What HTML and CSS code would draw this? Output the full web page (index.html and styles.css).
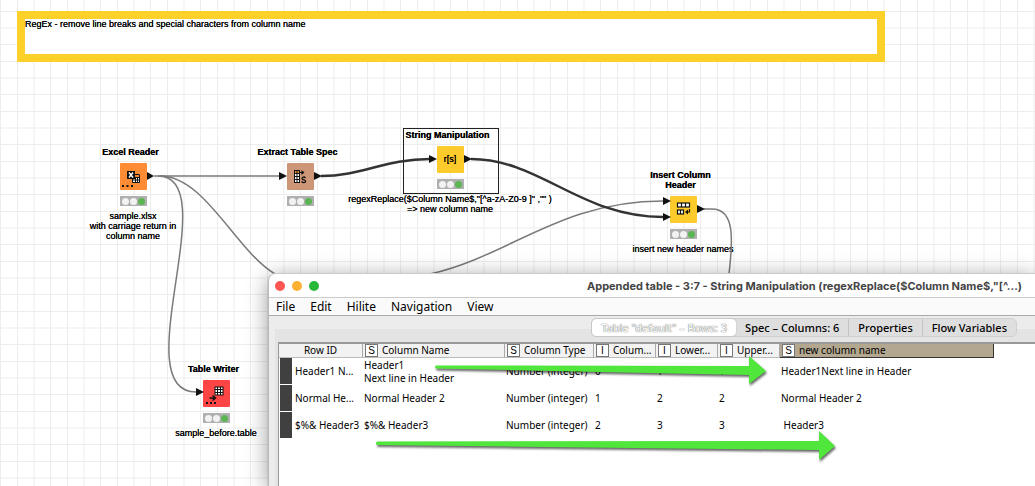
FILE: index.html
```
<!DOCTYPE html>
<html lang="en">
<head>
<meta charset="utf-8">
<title>Workflow editor</title>
<link rel="stylesheet" href="styles.css">
</head>
<body>
<main class="canvas">
  <svg class="layer" aria-hidden="true">
    <defs>
      <pattern id="grid" width="50" height="50" patternUnits="userSpaceOnUse">
        <path d="M0.5 0V50M17.5 0V50M34 0V50M0 11.5H50M0 28H50M0 44.5H50" stroke="#ededed" fill="none"/>
      </pattern>
    </defs>
    <rect width="100%" height="100%" fill="url(#grid)"/>
  </svg>

  <p class="note">RegEx - remove line breaks and special characters from column name</p>

  <section class="node excel">
    <h2 class="node-title">Excel Reader</h2>
    <svg class="node-icon" viewBox="0 0 27 27"><rect width="27" height="27" rx="1" fill="#fd8c35"/><path d="M12.500 11.500H19.500V19.500H12.500Z" fill="#fff" stroke="#111"/><path d="M13 12H19V14H13Z" fill="#f8862f"/><path d="M13 14.500H20M13 17H20M15.500 14V19M17.500 14V19" stroke="#111" fill="none"/><rect x="7" y="8" width="8" height="8" fill="#111"/><path d="M9 9.500L13 14.500M13 9.500L9 14.500" stroke="#fff" stroke-width="1.500"/><path d="M2 22h2v2h-2zM6.500 22h2v2h-2zM11 22h2v2h-2z" fill="#111"/></svg>
    <div class="lights"><i></i><i></i><i class="on"></i></div>
    <p class="caption">sample.xlsx<br>with carriage return in<br>column name</p>
  </section>

  <section class="node extract">
    <h2 class="node-title">Extract Table Spec</h2>
    <svg class="node-icon" viewBox="0 0 27 27"><rect width="27" height="27" rx="1" fill="#cd9777"/><path d="M7 7.500H13V20H7Z" fill="#fff"/><path d="M7 8H13V10.500H7Z" fill="#f58a20"/><path d="M7 7.500H13M7 10.500H13M7 13.500H13M7 16.500H13M7 19.500H13M7.500 7V20M10 7V20M12.500 7V20" stroke="#111" fill="none"/><path d="M13 9.500H16" stroke="#111"/><path d="M14.500 7L17.500 9.500L14.500 12Z" fill="#111"/><path d="M18.500 15C17.500 13.500 15 13.800 15 15.500C15 17.300 18.600 16.300 18.600 18.200C18.600 20 15.500 20 14.600 18.400" stroke="#111" stroke-width="1.300" fill="none"/></svg>
    <div class="lights"><i></i><i></i><i class="on"></i></div>
  </section>

  <section class="node string">
    <h2 class="node-title">String Manipulation</h2>
    <div class="node-icon yellow">r[s]</div>
    <div class="lights"><i></i><i></i><i class="on"></i></div>
    <p class="caption">regexReplace($Column Name$,"[^a-zA-Z0-9 ]" ,"" )<br>=&gt; new column name</p>
  </section>

  <section class="node insert">
    <h2 class="node-title">Insert Column<br>Header</h2>
    <svg class="node-icon" viewBox="0 0 27 27"><rect width="27" height="27" rx="1" fill="#fecb2c"/><rect x="7.500" y="7" width="12" height="4" fill="#fff" stroke="#111" stroke-width="1.200"/><path d="M11.500 7V11M15.500 7V11" stroke="#111" stroke-width="1.200"/><rect x="7.500" y="14" width="6" height="4" fill="#fff" stroke="#111" stroke-width="1.200"/><path d="M10.500 14V18M19.500 13V16H17" stroke="#111" stroke-width="1.200" fill="none"/><path d="M15 16L18 13.500V18.500Z" fill="#111"/></svg>
    <div class="lights"><i></i><i></i><i class="on"></i></div>
    <p class="caption">insert new header names</p>
  </section>

  <section class="node writer">
    <h2 class="node-title">Table Writer</h2>
    <svg class="node-icon" viewBox="0 0 27 27"><rect width="27" height="27" rx="1" fill="#fd4545"/><rect x="12" y="7" width="8" height="8" fill="#fff" stroke="#111"/><path d="M14.500 7V15M17.500 7V15M12 9.500H20M12 12.500H20" stroke="#111"/><path d="M6.500 18H12M9.500 15.500L12.500 18L9.500 20.500" stroke="#111" stroke-width="1.500" fill="none"/><path d="M3 22h2v2h-2zM7 22h2v2h-2zM11 22h2v2h-2z" fill="#111"/></svg>
    <div class="lights"><i></i><i></i><i class="on"></i></div>
    <p class="caption">sample_before.table</p>
  </section>

  <svg class="layer" aria-hidden="true">
    <g fill="none" stroke="#7a7a7a" stroke-width="1.500">
      <path d="M154 176H280"/>
      <path d="M158 176C226 176 124 392 196 392"/>
      <path d="M160 176C205 176 235 250 275 274"/>
      <path d="M430 274C510 256 560 201 663 201"/>
      <path d="M704 209H712C735 209 733 240 729 274"/>
    </g>
    <g fill="none" stroke="#333" stroke-width="2.500">
      <path d="M321 176C362 176 385 159 430 159"/>
      <path d="M471 159C540 159 580 217 663 217"/>
    </g>
    <g fill="#111">
      <path d="M147 172L154 176L147 180Z"/><path d="M279 172L287 176L279 180Z"/><path d="M314 172L322 176L314 180Z"/>
      <path d="M429 155L437 159L429 163Z"/><path d="M464 155L472 159L464 163Z"/>
      <path d="M663 197L671 201L663 205Z"/><path d="M663 213L671 217L663 221Z"/><path d="M697 205L705 209L697 213Z"/>
      <path d="M196 388L204 392L196 396Z"/>
    </g>
  </svg>

  <section class="window">
    <header class="titlebar">
      <div class="dots"><button class="dot red" aria-label="Close"></button><button class="dot amber" aria-label="Minimize"></button><button class="dot green" aria-label="Zoom"></button></div>
      <h1 class="window-title">Appended table - 3:7 - String Manipulation (regexReplace($Column Name$,"[^...)</h1>
    </header>
    <nav class="menubar"><button>File</button><button>Edit</button><button>Hilite</button><button>Navigation</button><button>View</button></nav>
    <div class="pane">
      <div class="tabs" role="tablist">
        <button class="tab selected" role="tab" aria-selected="true">Table "default" – Rows: 3</button>
        <button class="tab" role="tab">Spec – Columns: 6</button>
        <button class="tab" role="tab">Properties</button>
        <button class="tab" role="tab">Flow Variables</button>
      </div>
      <div class="sheet">
        <table class="data">
          <colgroup><col class="c-id"><col class="c-name"><col class="c-type"><col class="c-num"><col class="c-num"><col class="c-num"><col class="c-new"></colgroup>
          <thead>
            <tr><th class="rowid">Row ID</th><th><span class="kind">S</span>Column Name</th><th><span class="kind">S</span>Column Type</th><th><span class="kind">I</span>Colum...</th><th><span class="kind">I</span>Lower...</th><th><span class="kind">I</span>Upper...</th><th class="picked"><span class="kind">S</span>new column name</th></tr>
          </thead>
          <tbody>
            <tr><th class="key">Header1 N...</th><td>Header1<br>Next line in Header</td><td>Number (integer)</td><td>0</td><td>1</td><td>1</td><td>Header1Next line in Header</td></tr>
            <tr><th class="key">Normal He...</th><td>Normal Header 2</td><td>Number (integer)</td><td>1</td><td>2</td><td>2</td><td>Normal Header 2</td></tr>
            <tr><th class="key">$%&amp; Header3</th><td>$%&amp; Header3</td><td>Number (integer)</td><td>2</td><td>3</td><td>3</td><td>&nbsp;Header3</td></tr>
          </tbody>
        </table>
      </div>
    </div>
  </section>

  <svg class="layer arrows" aria-hidden="true">
    <g fill="#50e63c">
      <path d="M436 365.500L749 366V356L766 371L749 384V375L436 368.500Q434 367 436 365.500Z"/>
      <path d="M377 441.500L819 441V431L835 446L819 460V450L377 445Q375 443 377 441.500Z"/>
    </g>
  </svg>
</main>
</body>
</html>
```
FILE: styles.css
```
*, *::before { box-sizing: border-box; }
body, h1, h2, p { margin: 0; }
button { border: 0; padding: 0; background: none; font: inherit; color: inherit; }

.canvas {
  position: relative;
  min-height: 100vh;
  overflow: hidden;
  padding: 11px 150px 0 17px;
  background: #fff;
  color: #000;
  font: 9px/10px "Liberation Sans", Arial, sans-serif;
}
.layer { position: absolute; inset: 0; width: 100%; height: 100%; pointer-events: none; }
.note {
  position: relative;
  min-height: 51px;
  border: 8px solid #fdd02a;
  background: #fff;
}
.note, .node { text-shadow: 0 0 0 #000; }

/* workflow nodes */
.node {
  position: absolute;
  width: 220px;
  display: flex;
  flex-direction: column;
  align-items: center;
  text-align: center;
}
.excel { left: 23px; top: 147px; }
.extract { left: 190px; top: 147px; }
.string { left: 340px; top: 130px; }
.insert { left: 573px; top: 170px; }
.writer { left: 106px; top: 364px; }
.string::before {
  content: "";
  position: absolute;
  left: 63px;
  top: -2px;
  width: 96px;
  height: 66px;
  border: 1px solid #222;
}
.node-title { padding-right: 5px; font-size: 9px; line-height: 10px; font-weight: 700; }
.node-icon { width: 27px; height: 27px; margin-top: 6px; }
.yellow { border-radius: 1px; background: #fecb2c; line-height: 27px; }
.lights {
  display: flex;
  align-items: center;
  justify-content: center;
  gap: 1px;
  width: 27px;
  height: 10px;
  margin-top: 6px;
  background: #b0b0b0;
}
.lights i { width: 7px; height: 7px; border-radius: 50%; background: #f2f2f2; }
.lights .on { background: #5cb553; }
.caption { margin-top: 5px; white-space: nowrap; }

/* table window */
.window {
  position: absolute;
  left: 268px;
  top: 273px;
  right: 0;
  bottom: 0;
  display: flex;
  flex-direction: column;
  border-left: 1px solid #bbb;
  border-top: 1px solid #ccc;
  border-top-left-radius: 8px;
  background: #ececec;
  box-shadow: 0 4px 22px rgba(0, 0, 0, .4);
  overflow: hidden;
  font: 10px/13px "Noto Sans", sans-serif;
}
.titlebar { display: flex; align-items: center; height: 23px; padding: 0 13px 0 6px; background: #fff; }
.dots { display: flex; gap: 7px; }
.dot { width: 10px; height: 10px; border-radius: 50%; }
.red { background: #fc5753; }
.amber { background: #fdb032; }
.green { background: #27b83a; }
.window-title { margin-left: auto; font: 700 11px/14px Inter, sans-serif; color: #444; white-space: nowrap; }
.menubar {
  display: flex;
  align-items: center;
  gap: 15px;
  height: 19px;
  padding-left: 7px;
  border-top: 1px solid #ccc;
  border-bottom: 1px solid #aaa;
  background: #fafafa;
  font-size: 12px;
}
.pane {
  flex: 1;
  display: flex;
  flex-direction: column;
  padding: 2px 0 0 9px;
  background: linear-gradient(#e4e4e4, #e4e4e4) 6px 13px no-repeat;
}
.tabs {
  display: flex;
  align-self: flex-end;
  height: 19px;
  margin-right: 18px;
  border: 1px solid #d0d0d0;
  border-radius: 5px;
  background: #dedede;
  font-size: 11px;
  font-weight: 500;
}
.tab { padding: 0 9px; white-space: nowrap; }
.tab + .tab + .tab { border-left: 1px solid #c4c4c4; }
.selected { border-radius: 4px; background: #fff; color: #fff; font-weight: 400; text-shadow: 0 0 1px #555, 0 0 1px #999; box-shadow: 0 0 1px #777; }
.sheet { flex: 1; margin-top: 5px; border-top: 2px solid #999; border-left: 1px solid #999; background: #fff; }

.data { table-layout: fixed; width: 715px; border-spacing: 0; }
.c-id { width: 84px; }
.c-name { width: 142px; }
.c-type { width: 89px; }
.c-num { width: 62px; }
.c-new { width: 214px; }
.data th, .data td { padding: 0 0 0 1px; text-align: left; font-weight: 400; line-height: 13px; white-space: nowrap; }
.data thead th { height: 14px; padding-left: 2px; border-right: 1px solid #aaa; border-bottom: 1px solid #bbb; background: #f2f2f2; }
.data thead .rowid { padding-left: 0; text-align: center; }
.data thead th.picked { border-right-color: #333; border-bottom-color: #333; background: #b3a78f; }
.kind {
  display: inline-block;
  width: 13px;
  margin-right: 4px;
  border: 1px solid #777;
  background: #fff;
  font: 10px/11px "Liberation Sans", Arial, sans-serif;
  text-align: center;
}
.data tbody tr { height: 27px; }
.data tbody .key { padding-left: 16px; background: linear-gradient(#404040, #404040) 1px 0 / 12px 26px no-repeat; }

.arrows { filter: drop-shadow(1px 2px 1px rgba(0, 0, 0, .6)); }
```
